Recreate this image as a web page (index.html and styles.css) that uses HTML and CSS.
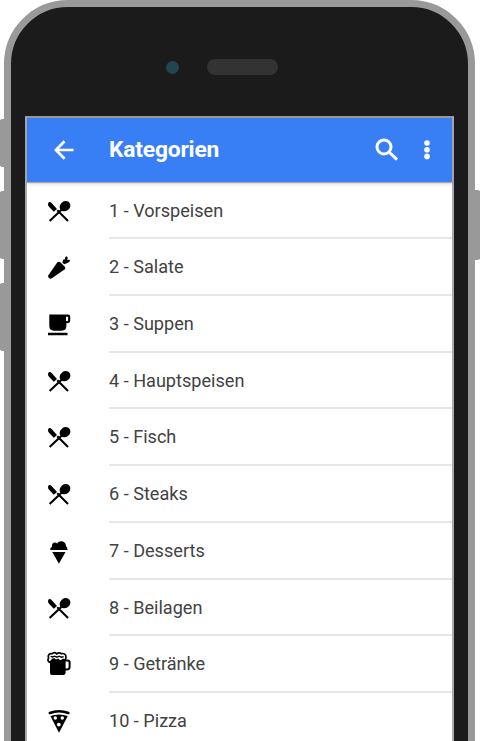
FILE: index.html
```html
<!DOCTYPE html>
<html lang="de">
<head>
<meta charset="utf-8">
<title>Kategorien</title>
<link rel="stylesheet" href="styles.css">
</head>
<body>
<svg class="defs" width="0" height="0" aria-hidden="true">
  <symbol id="cutlery" viewBox="0 0 28 28">
    <path d="M3.8 5.2C2.7 6.6 2.8 8.4 4 9.8l4.8 5 3.2-2.9-5.4-6C5.7 5 4.7 4.6 3.8 5.2z"/>
    <path d="M16.8 12.4L5.4 23.2M13 13.9l9.3 9.3" fill="none" stroke="#000" stroke-width="2.1" stroke-linecap="square"/>
    <ellipse cx="20" cy="9.2" rx="5.7" ry="4.8" transform="rotate(-38 20 9.2)"/>
  </symbol>
  <symbol id="carrot" viewBox="0 0 28 28">
    <path d="M12.3 9.3q1.7-1.2 3.3.3l4.2 4.2q1.3 1.5-.3 2.8L6.8 25.3q-1.5 1-2.9-.2-1.3-1.2-.5-2.8z"/>
    <path d="M17.6 9.9c-.1-1.5.3-2.6 1.2-3.7l1 .3c.1-1.4.5-2.5 1.2-3.2l1.5.7c.3.9.2 2-.3 2.9l2.2-.1.6 1.3c-1 1.5-2.4 2-3.8 2.3l-1.7.9z"/>
  </symbol>
  <symbol id="cup" viewBox="0 0 28 28">
    <path fill-rule="evenodd" d="M4.3 4.5H23q2.2 0 2.2 2v4q0 2.8-2.8 2.8h-1v2.5q0 4.9-4.8 4.9H9.1q-4.8 0-4.8-4.9zM21 6.7v4.2h1.5q.6 0 .6-.7V6.7zM3 22.7h19.5v2.5H3z"/>
  </symbol>
  <symbol id="icecream" viewBox="0 0 28 28">
    <path d="M5.2 13c0-1.5.6-2.6 1.8-3.2-.7-3.8 3-5.2 5.2-3.4 1.8-3.2 8.7-3 8.8 2.8 1 .8 1.5 2.1 1.5 3.8zM7.3 15.1h13.2l-6.6 11.7z"/>
  </symbol>
  <symbol id="beer" viewBox="0 0 28 28">
    <path d="M5 10h15.6v12.7q0 2.4-2.4 2.4H7.6Q5 25.1 5 22.7z"/>
    <path d="M19.8 10.5h2.8q2 0 2 2v4.6q0 2.3-2.3 2.3h-2.5" fill="none" stroke="#000" stroke-width="2"/>
    <path d="M4.6 12.2C2.6 11.6 2.7 9.1 3.6 8 2.4 5 4.9 2.9 7 3.8c1.4-1.2 3.5-1.2 4.7 0 1.5-1.1 3.6-1.2 4.7 0 2.3-.9 4.9.7 4.4 3 .6 2-.6 3.6-2.7 2.8-1.5 1.7-4 1.8-5-.1-1.5 1-3 .8-3.7-.4-1.5-.2-2.5.4-2.7 1.7z" fill="#fff" stroke="#000" stroke-width="1.7"/>
    <path d="M5.6 6.3l2 .7 2-.8 2.3 1 2.2-1 2.3 1 2.3-.6" fill="none" stroke="#000" stroke-width="1.4"/>
  </symbol>
  <symbol id="pizza" viewBox="0 0 28 28">
    <path d="M4.8 6Q14 2.4 23.4 6" fill="none" stroke="#000" stroke-width="2.5" stroke-linecap="round"/>
    <path d="M5.4 9.1Q14 5.7 22.8 9.1L14 25.7z"/>
    <g fill="#fff"><circle cx="10.3" cy="11" r="1.7"/><circle cx="17.3" cy="11" r="1.7"/><circle cx="13.8" cy="17.6" r="1.9"/></g>
  </symbol>
</svg>
<div class="stage">
  <i class="button mute"></i><i class="button up"></i><i class="button down"></i><i class="button power"></i>
  <main class="phone">
    <div class="sensors"><span class="camera"></span><span class="speaker"></span></div>
    <section class="screen">
      <header class="toolbar">
        <svg class="back" viewBox="0 0 20 20"><path d="M19.5 10H2M10.6 1.2L1.9 10l8.7 8.8"/></svg>
        <h1>Kategorien</h1>
        <svg class="search" viewBox="0 0 24 24"><circle cx="9" cy="9" r="7"/><path d="M14 14l8 7.6"/></svg>
        <svg class="more" viewBox="0 0 6 20"><circle cx="3" cy="3" r="2.8"/><circle cx="3" cy="9.7" r="2.8"/><circle cx="3" cy="16.4" r="2.8"/></svg>
      </header>
      <ul class="list">
        <li><svg><use href="#cutlery"/></svg><span>1 - Vorspeisen</span></li>
        <li><svg><use href="#carrot"/></svg><span>2 - Salate</span></li>
        <li><svg><use href="#cup"/></svg><span>3 - Suppen</span></li>
        <li><svg><use href="#cutlery"/></svg><span>4 - Hauptspeisen</span></li>
        <li><svg><use href="#cutlery"/></svg><span>5 - Fisch</span></li>
        <li><svg><use href="#cutlery"/></svg><span>6 - Steaks</span></li>
        <li><svg><use href="#icecream"/></svg><span>7 - Desserts</span></li>
        <li><svg><use href="#cutlery"/></svg><span>8 - Beilagen</span></li>
        <li><svg><use href="#beer"/></svg><span>9 - Getränke</span></li>
        <li><svg><use href="#pizza"/></svg><span>10 - Pizza</span></li>
      </ul>
    </section>
  </main>
</div>
</body>
</html>
```
FILE: styles.css
```css
* { box-sizing: border-box; }
body { margin: 0; background: #fff; font-family: Roboto, sans-serif; }
.defs { position: absolute; }
.stage { position: relative; width: 480px; height: 741px; overflow: hidden; }
.phone {
  position: relative;
  width: 471px;
  height: 900px;
  margin-left: 4px;
  padding: 0 14px;
  border: 7px solid #999;
  border-radius: 64px 64px 0 0;
  background: #1b1b1b;
}
.button { position: absolute; width: 12px; border-radius: 4px; background: #999; }
.mute { left: -1px; top: 119px; height: 48px; }
.up { left: -1px; top: 191px; height: 68px; }
.down { left: -1px; top: 283px; height: 68px; }
.power { left: 469px; top: 190px; height: 70px; }
.sensors { display: flex; align-items: flex-start; height: 109px; padding: 52px 0 0 141px; }
.camera { width: 13px; height: 13px; margin-top: 2px; border-radius: 50%; background: #214552; }
.speaker { width: 71px; height: 16px; margin-left: 28px; border-radius: 8px; background: #333; }
.screen { width: 429px; height: 800px; border: 2px solid #aaa; border-top-color: #999; background: #fff; }
.toolbar {
  display: flex;
  align-items: center;
  height: 63.5px;
  padding: 0 22px 0 27px;
  background: #387ff5;
  box-shadow: 0 1px 1px #aaa, 0 2px 4px rgba(0, 0, 0, .14);
}
.toolbar svg { flex: none; fill: none; stroke: #fff; }
.toolbar .back { width: 20px; height: 20px; stroke-width: 2.7; }
.toolbar h1 { flex: 1; margin: 1px 0 0 35px; color: #fff; font-size: 22.8px; font-weight: 700; line-height: 28px; letter-spacing: -.2px; }
.toolbar .search { width: 24px; height: 24px; stroke-width: 3; }
.toolbar .more { width: 6px; height: 20px; margin-left: 25px; fill: #fff; stroke: none; }
.list { margin: 0; padding: 1.2px 0 0; list-style: none; }
.list li { display: flex; height: 56.7px; padding-left: 18px; }
.list svg { flex: none; width: 28px; height: 28px; margin-top: 14px; }
.list span { flex: 1; margin-left: 36px; border-bottom: 2px solid #e6e6e6; color: #424242; font-size: 18.1px; line-height: 55.6px; }
```
